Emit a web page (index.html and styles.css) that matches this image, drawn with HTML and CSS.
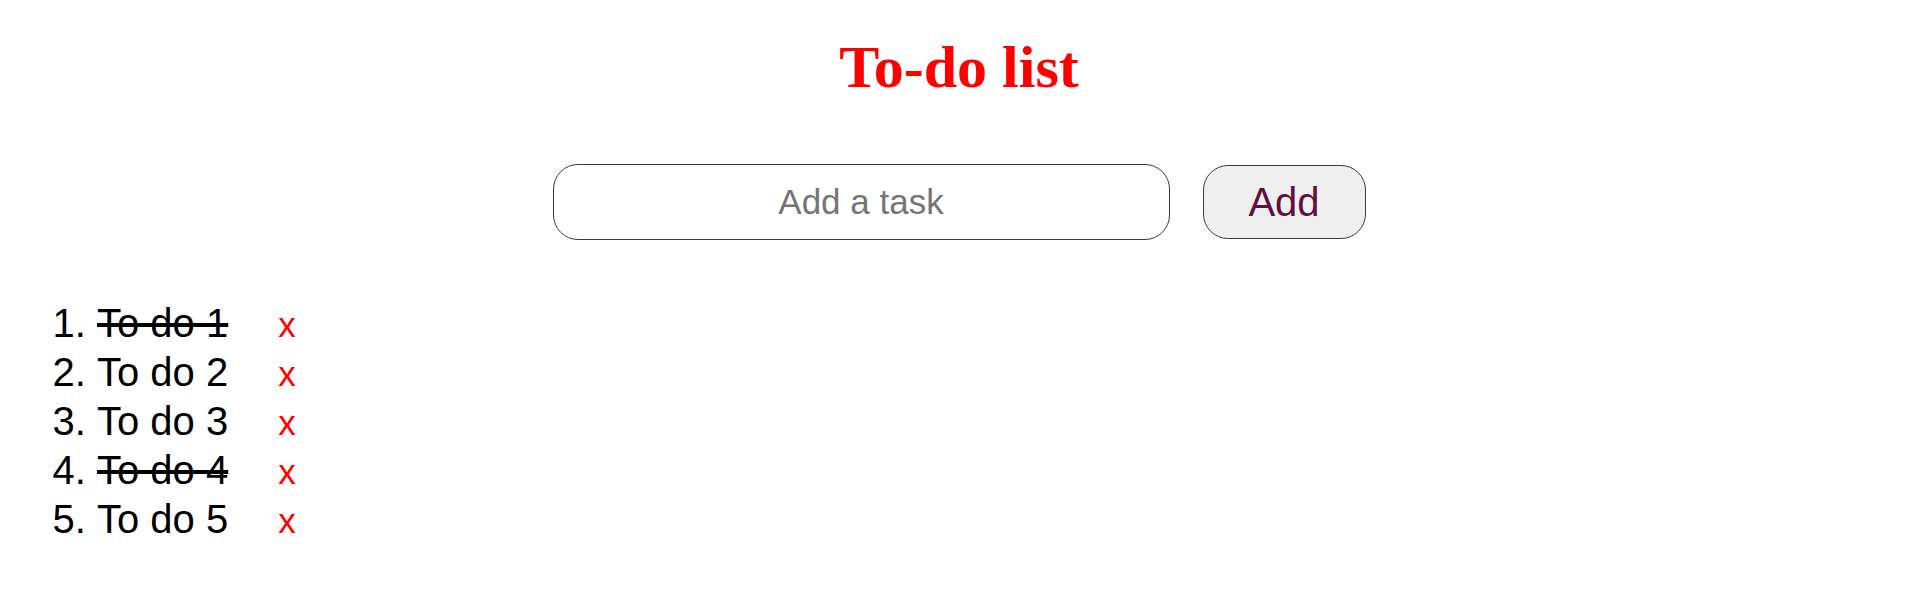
FILE: index.html
```html
<!DOCTYPE html>
<html lang="en">
<head>
<meta charset="utf-8">
<title>To-do list</title>
<link rel="stylesheet" href="styles.css">
</head>
<body>
  <main class="app">
    <h1 class="title">To-do list</h1>
    <form class="add-form" onsubmit="return false;">
      <input class="task-input" type="text" placeholder="Add a task">
      <button class="add-btn" type="submit">Add</button>
    </form>
    <ol class="tasks">
      <li class="task"><span class="task-text done">To do 1</span><button class="remove" type="button">x</button></li>
      <li class="task"><span class="task-text">To do 2</span><button class="remove" type="button">x</button></li>
      <li class="task"><span class="task-text">To do 3</span><button class="remove" type="button">x</button></li>
      <li class="task"><span class="task-text done">To do 4</span><button class="remove" type="button">x</button></li>
      <li class="task"><span class="task-text">To do 5</span><button class="remove" type="button">x</button></li>
    </ol>
  </main>
</body>
</html>
```

FILE: styles.css
```css
html, body {
  margin: 0;
  padding: 0;
  background: #ffffff;
}

body {
  font-family: "Liberation Sans", Arial, sans-serif;
  color: #000000;
}

.app {
  display: flex;
  flex-direction: column;
}

.title {
  margin: 33px 0 0;
  text-align: center;
  font-family: "Liberation Serif", "Times New Roman", serif;
  font-weight: bold;
  font-size: 60px;
  line-height: normal;
  color: #ff0000;
}

.add-form {
  display: flex;
  justify-content: center;
  align-items: center;
  gap: 33px;
  margin-top: 62px;
}

.task-input {
  box-sizing: border-box;
  width: 617px;
  height: 76px;
  margin: 0;
  padding: 0 20px;
  border: 1px solid #3a3a3a;
  border-radius: 25px;
  background: #ffffff;
  font-family: "Liberation Sans", Arial, sans-serif;
  font-size: 35px;
  text-align: center;
  color: #000000;
  outline: none;
}

.task-input::placeholder {
  color: #757575;
}

.add-btn {
  box-sizing: border-box;
  width: 163px;
  height: 74px;
  margin: 0;
  padding: 0;
  border: 1px solid #3a3a3a;
  border-radius: 25px;
  background: #efefef;
  font-family: "Liberation Sans", Arial, sans-serif;
  font-size: 40px;
  color: #5f0f40;
  cursor: pointer;
}

.tasks {
  margin: 59px 0 0;
  padding: 0 0 0 97px;
  font-size: 40px;
  line-height: 49px;
}

.task {
  height: 49px;
}

.task-text.done {
  text-decoration: line-through;
  text-decoration-thickness: 4px;
}

.remove {
  margin: 0 0 0 50px;
  padding: 0;
  border: none;
  background: none;
  font-family: "Liberation Sans", Arial, sans-serif;
  font-size: 35px;
  line-height: 49px;
  color: #ff0000;
  cursor: pointer;
  vertical-align: baseline;
}
```
